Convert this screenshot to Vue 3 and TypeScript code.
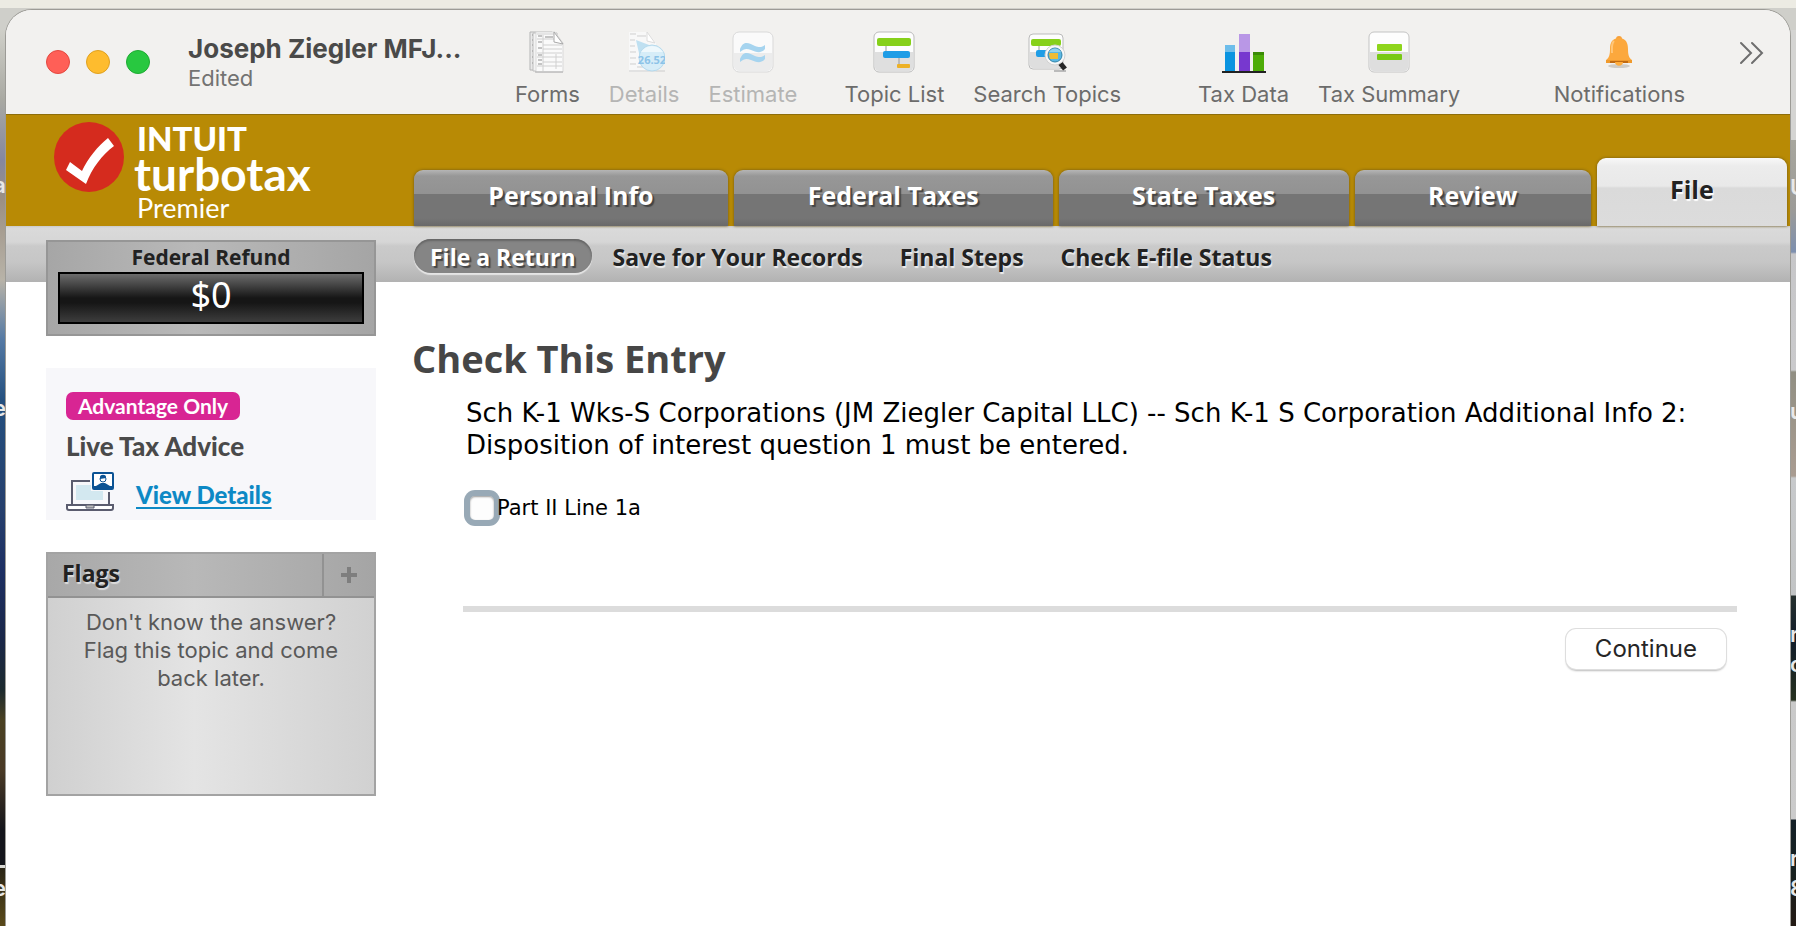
<script setup lang="ts">
import { ref } from 'vue'

interface Tab { label: string; weight: number }
interface Scrap { text: string; top: number }

const tabs: Tab[] = [
  { label: 'Personal Info', weight: 315 },
  { label: 'Federal Taxes', weight: 320 },
  { label: 'State Taxes', weight: 291 },
  { label: 'Review', weight: 237 },
  { label: 'File', weight: 191 },
]
const activeTab = ref('File')

const sections: string[] = ['File a Return', 'Save for Your Records', 'Final Steps', 'Check E-file Status']
const activeSection = ref('File a Return')

const partTwoLine = ref(false)

const leftScraps: Scrap[] = [
  { text: 'a', top: 171 },
  { text: 'e', top: 394 },
  { text: 'e', top: 874 },
]
const rightScraps: Scrap[] = [
  { text: 'U', top: 173 },
  { text: 'u', top: 397 },
  { text: 'r', top: 620 },
  { text: 'o', top: 650 },
  { text: 'r', top: 844 },
  { text: '8', top: 874 },
]
</script>

<template>
  <div class="desktop">
    <div class="edge edge-left" aria-hidden="true">
      <span v-for="s in leftScraps" :key="s.top" :style="{ top: s.top + 'px' }">{{ s.text }}</span>
    </div>
    <div class="edge edge-right" aria-hidden="true">
      <span v-for="s in rightScraps" :key="s.top" :style="{ top: s.top + 'px' }">{{ s.text }}</span>
    </div>

    <div class="window">
      <header class="toolbar">
        <div class="lights">
          <button class="light close" aria-label="Close"></button>
          <button class="light minimize" aria-label="Minimize"></button>
          <button class="light zoom" aria-label="Zoom"></button>
        </div>
        <div class="doc">
          <div class="doc-title">Joseph Ziegler MFJ...</div>
          <div class="doc-state">Edited</div>
        </div>

        <div class="tools">
          <div class="group">
            <button class="tool">
              <svg width="42" height="42" viewBox="0 0 42 42">
                <path d="M4 1h22v38H4z" fill="#e9e9e9" stroke="#b5b5b5" />
                <path d="M6 4h3M6 9h3M6 14h3M6 20h3M6 26h3M6 32h3" stroke="#777" />
                <path d="M7 2h24v38H7z" fill="#f3f3f3" stroke="#bdbdbd" />
                <path d="M10 1h19l8 11v29H10z" fill="#fafafa" stroke="#d9d9d9" />
                <path d="M11 3h17M11 8h17M17 14h19M17 18h19M11 22h25M11 26h25M17 31h19M11 35h25M17 4v36M30 23v15" stroke="#d0d0d0" />
                <path d="M12 5h4M19 6h8M12 11h4M12 17h4M12 24h4M12 29h4M12 33h4" stroke="#8e8e8e" />
                <path d="M28 1v10l9 2z" fill="#fff" stroke="#a9a9a9" />
                <path d="M9 41h28" stroke="#aaa" />
              </svg>
              <span>Forms</span>
            </button>
            <button class="tool" disabled>
              <svg width="42" height="42" viewBox="0 0 42 42">
                <path d="M6 1h18l9 11v29H6z" fill="#f8f8f8" />
                <path d="M7 3h6M7 9h5M7 15h5M7 21h6M7 27h6M7 33h6M14 5h9M14 36h18" stroke="#cfcfcf" />
                <path d="M24 1v9l8 2z" fill="#fff" stroke="#dcdcdc" />
                <path d="M13 9l21 8-16 14z" fill="#bfe0f1" />
                <path d="M6 40h36" stroke="#ccc" />
                <circle cx="29" cy="27" r="13" fill="#d6edf8" stroke="#b5d9ec" />
                <path d="M18 21a13 13 0 0 1 22 0z" fill="#eef8fc" />
                <text x="29" y="33" text-anchor="middle" font-family="Open Sans, sans-serif" font-size="11" font-weight="700" fill="#8cc3e8">26.52</text>
              </svg>
              <span>Details</span>
            </button>
            <button class="tool" disabled>
              <svg width="42" height="42" viewBox="0 0 42 42">
                <rect x="1" y="1" width="40" height="40" rx="6" fill="#fafafa" stroke="#d9d9d9" />
                <path d="M2 22h38v13a5 5 0 0 1-5 5H7a5 5 0 0 1-5-5z" fill="#ececec" />
                <path d="M8 18c4-10 10-5 15-3s7 1 10-1v4c-4 5-9 3-14 1s-7-1-11 2zM8 28c4-10 10-5 15-3s7 1 10-1v4c-4 5-9 3-14 1s-7-1-11 2z" fill="#a6d4ef" />
              </svg>
              <span>Estimate</span>
            </button>
          </div>
          <div class="spring spring-small"></div>
          <div class="group">
            <button class="tool">
              <svg width="42" height="42" viewBox="0 0 42 42">
                <rect x="1" y="1" width="40" height="40" rx="5" fill="#fdfdfd" stroke="#bbb" />
                <path d="M2 21h38v15a4 4 0 0 1-4 4H6a4 4 0 0 1-4-4z" fill="#dfdfdf" />
                <path d="M13 14v7M26 25v9" stroke="#999" />
                <rect x="4" y="7" width="34" height="8" rx="2" fill="#86d01a" />
                <rect x="10" y="20" width="27" height="7" rx="2" fill="#1f9de6" />
                <rect x="24" y="33" width="13" height="4" rx="1" fill="#edb126" />
              </svg>
              <span>Topic List</span>
            </button>
            <button class="tool">
              <svg width="42" height="42" viewBox="0 0 42 42">
                <rect x="3" y="3" width="34" height="35" rx="4" fill="#fdfdfd" stroke="#bbb" />
                <path d="M4 21h32v13a3 3 0 0 1-3 3H7a3 3 0 0 1-3-3z" fill="#dedede" />
                <path d="M13 14v6" stroke="#999" />
                <rect x="5" y="8" width="30" height="7" rx="2" fill="#86d01a" />
                <rect x="10" y="19" width="14" height="7" rx="2" fill="#1f9de6" />
                <path d="M28 40h12" stroke="#bbb" stroke-width="2" />
                <path d="M34 32l5 6" stroke="#262626" stroke-width="5" />
                <circle cx="29" cy="24" r="10" fill="#f7f7f7" stroke="#d2d2d2" />
                <circle cx="29" cy="24" r="7" fill="#5ab7e3" stroke="#3183a8" />
                <path d="M23 22h9v6h-8z" fill="#f0bc35" />
                <path d="M23 21a7 7 0 0 1 12 0z" fill="#91d1ee" />
              </svg>
              <span>Search Topics</span>
            </button>
          </div>
          <div class="spring spring-medium"></div>
          <div class="group">
            <button class="tool">
              <svg width="44" height="42" viewBox="0 0 44 42">
                <path d="M3 14h10v7H3z" fill="#6dbdea" /><path d="M3 21h10v20H3z" fill="#0a94e0" />
                <path d="M17 3h11v18H17z" fill="#b997e6" /><path d="M17 21h11v20H17z" fill="#7738cf" />
                <path d="M31 21h11v20H31z" fill="#4eac07" /><path d="M31 21h11v3H31z" fill="#3b8b06" />
                <path d="M0 41h44" stroke="#222" stroke-width="2" />
              </svg>
              <span>Tax Data</span>
            </button>
            <button class="tool">
              <svg width="42" height="42" viewBox="0 0 42 42">
                <rect x="1" y="1" width="40" height="40" rx="5" fill="#fdfdfd" stroke="#c3c3c3" />
                <path d="M2 21h38v15a4 4 0 0 1-4 4H6a4 4 0 0 1-4-4z" fill="#dedede" />
                <rect x="9" y="13" width="25" height="7" rx="1" fill="#8ed51c" />
                <rect x="9" y="23" width="25" height="6" rx="1" fill="#78c915" />
              </svg>
              <span>Tax Summary</span>
            </button>
          </div>
          <div class="spring spring-large"></div>
          <button class="tool">
            <svg width="42" height="42" viewBox="0 0 42 42">
              <ellipse cx="21" cy="35" rx="11" ry="2" fill="#cfcbc4" />
              <circle cx="21" cy="8" r="3" fill="#f8a13a" />
              <path d="M21 7c7 0 9 5 9 11 0 6 1 9 4 11v2H8v-2c3-2 4-5 4-11 0-6 2-11 9-11z" fill="#fca83d" />
              <path d="M16 10c-3 3-2 8-2 12" fill="none" stroke="#ffc678" stroke-width="2" />
              <path d="M8 29h26v3H8z" fill="#f09a2c" /><path d="M12 30h18v2H12z" fill="#c06a12" />
              <path d="M17 31h8c0 5-8 5-8 0z" fill="#ffad3d" />
            </svg>
            <span>Notifications</span>
          </button>
        </div>

        <button class="more" aria-label="More tools">
          <svg width="26" height="24" viewBox="0 0 26 24" fill="none" stroke="#6e6e6e" stroke-width="2" stroke-linecap="round">
            <path d="M2 2l10 10L2 22M13 2l10 10-10 10" />
          </svg>
        </button>
      </header>

      <div class="banner">
        <div class="logo">
          <svg width="70" height="70" viewBox="0 0 70 70">
            <circle cx="35" cy="35" r="35" fill="#d52b1e" />
            <path d="M16 40l12 9c6-13 16-25 26-33l6 8c-12 9-22 22-28 38L12 48z" fill="#fff" />
          </svg>
          <div class="wordmark">
            <span class="brand">INTUIT</span>
            <span class="product">turbotax</span>
            <span class="edition">Premier</span>
          </div>
        </div>
        <nav class="tabs" aria-label="Steps">
          <button
            v-for="tab in tabs"
            :key="tab.label"
            class="tab"
            :class="{ active: tab.label === activeTab }"
            :style="{ flexGrow: tab.weight }"
            @click="activeTab = tab.label"
          >{{ tab.label }}</button>
        </nav>
      </div>

      <nav class="subnav" aria-label="Sections">
        <a
          v-for="s in sections"
          :key="s"
          href="#"
          :class="{ current: s === activeSection }"
          @click.prevent="activeSection = s"
        >{{ s }}</a>
      </nav>

      <div class="body">
        <aside class="side">
          <section class="refund">
            <h2>Federal Refund</h2>
            <div class="amount">$0</div>
          </section>

          <section class="advice">
            <span class="badge">Advantage Only</span>
            <h2>Live Tax Advice</h2>
            <div class="advice-row">
              <svg width="48" height="40" viewBox="0 0 48 40" fill="none">
                <path d="M24 9H6v23M43 20v12" stroke="#5a5c6e" stroke-width="2" />
                <path d="M10 13h15v6h12v9H10z" fill="#d3e8f0" />
                <path d="M1 33h46v3a2 2 0 0 1-2 2H3a2 2 0 0 1-2-2z" fill="#fff" stroke="#5a5c6e" stroke-width="2" />
                <path d="M20 33h8v3h-8z" stroke="#5a5c6e" fill="#bbb" />
                <rect x="27" y="1" width="20" height="16" rx="1" fill="#fff" stroke="#0b5394" stroke-width="2" />
                <path d="M30 17v-3l5-3h4l5 3v3z" fill="#0b5394" />
                <path d="M27 14h20v3H27z" fill="#0b5394" />
                <circle cx="37" cy="7" r="3" fill="#fff" stroke="#0b5394" /><path d="M34 7V5c0-3 6-3 6 0v1z" fill="#0b5394" />
              </svg>
              <a href="#">View Details</a>
            </div>
          </section>

          <section class="flags">
            <div class="flags-head">
              <h2>Flags</h2>
              <button aria-label="Add flag">
                <svg width="16" height="16" viewBox="0 0 16 16"><path d="M8 0v16M0 8h16" stroke="#7e7e7e" stroke-width="4" /></svg>
              </button>
            </div>
            <p>Don't know the answer? Flag this topic and come back later.</p>
          </section>
        </aside>

        <main class="main">
          <h1>Check This Entry</h1>
          <div class="entry">
            <p>Sch K-1 Wks-S Corporations (JM Ziegler Capital LLC) -- Sch K-1 S Corporation Additional Info 2: Disposition of interest question 1 must be entered.</p>
            <label class="check" for="part-two">
              <input id="part-two" v-model="partTwoLine" type="checkbox" />
              <span>Part II Line 1a</span>
            </label>
            <hr />
            <div class="actions"><button class="continue">Continue</button></div>
          </div>
        </main>
      </div>
    </div>
  </div>
</template>

<style>
body { margin: 0; }
</style>

<style scoped>
* { box-sizing: border-box; }
h1, h2, p { margin: 0; }
button { font: inherit; padding: 0; border: 0; background: none; }

.desktop {
  position: relative;
  min-height: 100vh;
  padding: 10px 6px 0;
  display: flex;
  overflow: hidden;
  background: linear-gradient(#ecebe3 8px, #cfcfca 8px, #cfcfca 30px, #bbb 30px);
  font-family: "Open Sans", "Noto Sans", sans-serif;
}
.edge {
  position: absolute;
  top: 30px;
  bottom: 0;
  width: 6px;
  overflow: hidden;
  color: #e8e8e8;
  font-family: Inter, sans-serif;
  font-size: 22px;
  font-weight: 600;
}
.edge span { position: absolute; line-height: 28px; margin-top: -30px; }
.edge-left {
  left: 0;
  background: linear-gradient(#cfcfc8, #a9a9a2 70px, #8587a0 130px, #9c9083 170px, #b8b3a8 250px, #5479a4 310px, #24507f 370px, #263f6c 480px, #1d2f63 540px, #1a2748 610px, #1c2a2e 660px, #4a4122 690px, #4a3a26 740px, #14151b 800px, #14151b 835px, #d8d8d4 835px, #d8d8d4 838px, #2a2516 838px, #5a4a1a);
}
.edge-left span { right: 0; }
.edge-right {
  right: 0;
  background: linear-gradient(#d4d4d2 110px, #a7a69d 110px, #9c9b98 180px, #7d8fae 222px, #c6c6c8 224px, #cacacc 340px, #918f83 342px, #a99c91 446px, #c7c9cb 448px, #c2c4c5 565px, #26302e 566px, #121d2a 610px, #26301f 670px, #c9c9c9 672px, #cbcbcb 789px, #142027 790px, #182120 840px, #241a14);
}
.edge-right span { left: 0; }

.window {
  position: relative;
  flex: 1;
  min-width: 0;
  overflow: hidden;
  border-radius: 26px 26px 0 0;
  background: #fff;
  box-shadow: 0 0 0 1px #9c9b96;
}

/* Toolbar */
.toolbar {
  display: flex;
  height: 105px;
  padding: 0 25px 0 40px;
  background: #f2f1ef;
  border-bottom: 1px solid #8d6d0a;
  font-family: Inter, "Liberation Sans", sans-serif;
}
.lights { display: flex; gap: 16px; padding-top: 40px; }
.light { width: 24px; height: 24px; border-radius: 50%; border: 1px solid; }
.close { background: #ff5f57; border-color: #e4483f; }
.minimize { background: #febc2e; border-color: #e0a11f; }
.zoom { background: #28c840; border-color: #1fab33; }
.doc { width: 327px; margin-left: 38px; padding-top: 23px; }
.doc-title { font-size: 26px; line-height: 32px; font-weight: 700; color: #4a4a49; white-space: nowrap; }
.doc-state { font-size: 22px; line-height: 26px; color: #737372; }
.tools { flex: 1; display: flex; padding: 21px 54px 0 0; }
.spring-small { flex: 48 1 0; }
.spring-medium { flex: 78 1 0; }
.spring-large { flex: 95 1 0; }
.group { display: flex; gap: 29px; }
.tool {
  display: flex;
  flex-direction: column;
  align-items: center;
  gap: 7px;
  height: 77px;
  font-size: 22px;
  line-height: 28px;
  color: #6c6c6b;
  white-space: nowrap;
}
.tool:disabled { color: #b5b5b4; }
.more { height: 24px; margin-top: 31px; }

/* Brand banner and tabs */
.banner { display: flex; height: 111px; background: #b88a05; }
.logo { display: flex; width: 408px; padding: 7px 0 0 48px; gap: 10px; color: #fff; font-family: Lato, sans-serif; }
.logo svg { flex: none; }
.wordmark { display: flex; flex-direction: column; }
.brand { font-size: 33px; line-height: 32px; font-weight: 900; padding-left: 3px; }
.product { font-size: 46px; line-height: 40px; font-weight: 700; }
.edition { font-size: 27px; line-height: 28px; padding-left: 3px; }
.tabs { flex: 1; display: flex; align-items: flex-end; gap: 6px; padding-right: 3px; }
.tab {
  flex: 1 1 0;
  height: 56px;
  border-radius: 9px 9px 0 0;
  background: linear-gradient(#b5b5b5, #979797 6px, #929292 24px, #757575 24px, #757575 48px, #696969);
  box-shadow: 0 0 3px #6d5615;
  color: #fff;
  font-size: 25px;
  line-height: 32px;
  font-weight: 700;
  padding-bottom: 6px;
  text-shadow: 2px 2px 1px #444;
}
.tab.active {
  height: 68px;
  background: linear-gradient(#f8f8f8, #ececec 8px, #e9e9e9 28px, #dadada 30px, #dcdcdc);
  color: #222;
  text-shadow: 1px 2px 1px #fff;
}
.subnav {
  display: flex;
  align-items: center;
  gap: 5px;
  height: 56px;
  padding: 4px 0 0 408px;
  background: linear-gradient(#c9c9c9, #dadada 2px, #d6d6d6 16px, #cacaca 20px, #c6c6c6 36px, #b2b2b2);
}
.subnav a {
  height: 34px;
  padding: 0 16px;
  border-radius: 17px;
  font-size: 23px;
  line-height: 36px;
  font-weight: 700;
  color: #222;
  text-decoration: none;
  text-shadow: 1px 2px 1px #eee;
}
.subnav a.current {
  background: #858585;
  color: #fff;
  text-shadow: 2px 2px 1px #444;
  box-shadow: 0 2px 1px #e5e5e5, inset 0 2px 2px #666;
}

/* Content */
.body { display: flex; padding: 0 53px 0 40px; }
.side { position: relative; flex: none; width: 330px; margin-top: -42px; display: flex; flex-direction: column; }
.refund {
  height: 96px;
  padding: 0 10px;
  border: 2px solid #969696;
  background: linear-gradient(90deg, #a6a6a6, #b9b9b9 45%, #a5a5a5);
  text-align: center;
}
.refund h2 { font-size: 21px; line-height: 30px; font-weight: 700; color: #222; }
.amount {
  height: 52px;
  border: 2px solid #000;
  background: linear-gradient(#6c6c6c, #161616 50%, #161616 60%, #3d3d3d);
  color: #fff;
  font-family: "Noto Sans", sans-serif;
  font-size: 36px;
  line-height: 42px;
}
.advice { height: 152px; margin-top: 32px; padding: 24px 20px 0; background: #f7f7fa; font-family: Lato, sans-serif; }
.badge {
  display: inline-block;
  padding: 0 12px;
  border-radius: 7px;
  background: #d82593;
  color: #fff;
  font-size: 21px;
  line-height: 28px;
  font-weight: 700;
  vertical-align: top;
}
.advice h2 { margin-top: 10px; font-size: 26px; line-height: 32px; font-weight: 900; color: #4a4a4a; }
.advice-row { display: flex; align-items: flex-start; gap: 22px; margin-top: 10px; }
.advice-row a { padding-top: 6px; font-size: 24px; line-height: 34px; font-weight: 900; color: #0d89c5; text-decoration-thickness: 2px; text-underline-offset: 3px; }
.flags {
  height: 244px;
  margin-top: 32px;
  border: 2px solid #a3a3a3;
  background: linear-gradient(90deg, #d0d0d0, #e4e4e4 45%, #d1d1d1);
}
.flags-head {
  display: flex;
  height: 44px;
  border-bottom: 2px solid #929292;
  background: linear-gradient(90deg, #a8a8a8, #b8b8b8 45%, #a5a5a5);
}
.flags-head h2 { flex: 1; padding-left: 14px; font-size: 23px; line-height: 38px; font-weight: 700; color: #222; text-shadow: 1px 2px 1px #ddd; }
.flags-head button { width: 52px; border-left: 2px solid #929292; display: flex; align-items: center; justify-content: center; }
.flags p { padding: 10px 24px; font-family: Inter, sans-serif; font-size: 22px; line-height: 28px; text-align: center; color: #595959; }

.main { flex: 1; min-width: 0; padding: 50px 0 0 36px; }
.main h1 { font-size: 38px; line-height: 52px; font-weight: 700; color: #464646; }
.entry { padding-left: 51px; font-family: "DejaVu Sans", sans-serif; }
.entry p { padding: 13px 0 0 3px; font-size: 26px; line-height: 32px; color: #000; }
.check { display: inline-flex; align-items: center; margin-top: 29px; margin-left: 7px; color: #000; font-size: 21px; line-height: 36px; }
.check input {
  appearance: none;
  width: 24px;
  height: 24px;
  margin: 0 3px 0 0;
  border-radius: 5px;
  background: #fdfdfd;
  box-shadow: 0 0 0 6px #98a9b6, inset 0 1px 2px #999;
}
.check input:checked { background: #3478f6; }
.entry hr { height: 6px; margin: 80px 0 0; border: 0; background: #dcdcdc; }
.actions { display: flex; justify-content: flex-end; padding: 17px 11px 0 0; }
.continue {
  height: 40px;
  padding: 0 29px;
  border-radius: 10px;
  background: #fff;
  box-shadow: 0 0 0 1px #dedede, 0 2px 2px #bbb;
  color: #262626;
  font-family: Inter, sans-serif;
  font-size: 24px;
  line-height: 40px;
}
</style>
